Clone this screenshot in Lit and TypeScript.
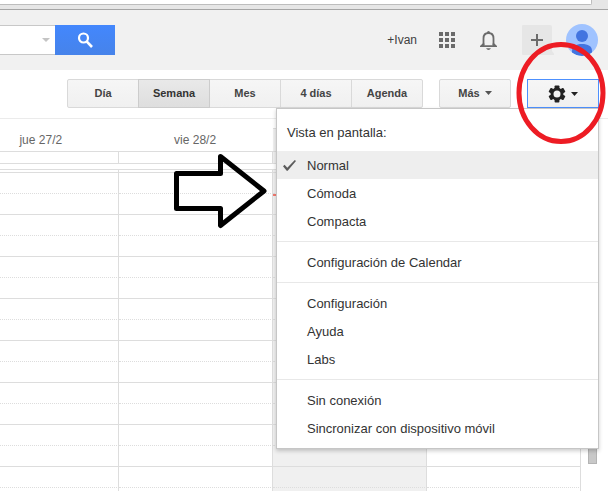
import { LitElement, html, css, svg } from "lit";
import { customElement } from "lit/decorators.js";
import { classMap } from "lit/directives/class-map.js";

const VIEWS = ["Día", "Semana", "Mes", "4 días", "Agenda"];
const DAYS = [
  { label: "jue 27/2", today: false },
  { label: "vie 28/2", today: false },
  { label: "", today: true },
  { label: "", today: false },
];
const DENSITIES = ["Normal", "Cómoda", "Compacta"];
const GROUPS = [
  ["Configuración de Calendar"],
  ["Configuración", "Ayuda", "Labs"],
  ["Sin conexión", "Sincronizar con dispositivo móvil"],
];
const HALF_HOURS = Array.from({ length: 16 }, (_, i) => i);

@customElement("top-bar")
export class TopBar extends LitElement {
  static styles = css`
    :host {
      display: block;
      flex: none;
    }
    .chrome {
      box-sizing: border-box;
      height: 10px;
      padding-right: 16px;
      background: #e6e6e6;
      border-bottom: 1px solid #a5a5a5;
    }
    .address {
      box-sizing: border-box;
      height: 5px;
      background: #fff;
      border: solid #bdbdbd;
      border-width: 0 1px 1px 0;
      border-radius: 0 0 2px 0;
    }
    .bar {
      box-sizing: border-box;
      display: flex;
      align-items: center;
      height: 60px;
      padding-right: 10px;
      background: #f1f1f1;
    }
    form {
      display: flex;
      height: 30px;
    }
    .field {
      box-sizing: border-box;
      display: flex;
      align-items: center;
      width: 55px;
      padding-right: 5px;
      background: #fff;
      border: solid #c8c8c8;
      border-width: 1px 0;
    }
    input {
      flex: 1;
      min-width: 0;
      border: 0;
      padding: 0;
      background: none;
      outline: none;
    }
    svg {
      display: block;
    }
    button {
      display: grid;
      place-items: center;
      border: 0;
      padding: 0;
    }
    .search {
      width: 60px;
      background: linear-gradient(#4387fd, #4683ea);
    }
    nav {
      display: flex;
      align-items: center;
      margin-left: auto;
    }
    a {
      color: #404040;
      font-size: 12px;
      line-height: 16px;
      text-decoration: none;
    }
    .icon {
      background: none;
    }
    .apps {
      margin-left: 22px;
    }
    .bell {
      margin-left: 25px;
    }
    .share {
      margin: 0 12px 0 24px;
    }
  `;

  render() {
    return html`
      <div class="chrome"><div class="address"></div></div>
      <header class="bar">
        <form>
          <div class="field">
            <input type="text" aria-label="Buscar" />
            <svg width="8" height="4"><path d="M0 0h8L4 4z" fill="#c4c4c4" /></svg>
          </div>
          <button class="search" type="button" aria-label="Buscar">
            <svg width="16" height="16" fill="none" stroke="#fff">
              <circle cx="6.500" cy="6" r="4.500" stroke-width="2.200" />
              <path d="M9.600 9.300L15 15" stroke-width="2.600" />
            </svg>
          </button>
        </form>
        <nav>
          <a href="#">+Ivan</a>
          <button class="icon apps" aria-label="Aplicaciones">
            <svg width="16" height="16" fill="#6b6b6b">
              ${[0, 6, 12].map((y) => [0, 6, 12].map((x) => svg`<rect x=${x} y=${y} width="4" height="4" />`))}
            </svg>
          </button>
          <button class="icon bell" aria-label="Notificaciones">
            <svg width="18" height="20" viewBox="0 0 18 20">
              <path d="M3.500 15V8.500C3.500 5 5.500 3 8.500 3s5 2 5 5.500V15" fill="none" stroke="#6b6b6b" stroke-width="1.800" />
              <path d="M7 3V2.500a1.500 1.500 0 0 1 3 0V3zM2.600 13.500h11.800L17 16v1H0v-1zM4.400 13.500V15.200h8.200V13.500zM6 18.200h5q-1 1.800-2.500 1.800T6 18.200z" fill="#6b6b6b" fill-rule="evenodd" />
            </svg>
          </button>
          <button class="icon share" aria-label="Compartir">
            <svg width="32" height="30">
              <path d="M1 0h27a2 2 0 0 1 2 2v24l3 4H1a1 1 0 0 1-1-1V1a1 1 0 0 1 1-1z" fill="#e6e6e6" />
              <path d="M14 9h2v5h5v2h-5v5h-2v-5H9v-2h5z" fill="#6b6b6b" />
            </svg>
          </button>
          <button class="icon" aria-label="Cuenta">
            <svg width="32" height="32">
              <clipPath id="disc"><circle cx="16" cy="16" r="16" /></clipPath>
              <g clip-path="url(#disc)">
                <rect width="32" height="32" fill="#a0c3ff" />
                <circle cx="16" cy="12" r="6" fill="#4274e0" />
                <path d="M6 27c0-5 4-7 10-7s10 2 10 7v2q-10 6-20 0z" fill="#4274e0" />
              </g>
            </svg>
          </button>
        </nav>
      </header>
    `;
  }
}

@customElement("settings-menu")
export class SettingsMenu extends LitElement {
  static styles = css`
    :host {
      display: block;
      box-sizing: border-box;
      padding: 6px 0;
      background: #fff;
      border: 1px solid #c6c6c6;
      box-shadow: 0 2px 4px rgba(0, 0, 0, 0.2);
      color: #333;
      font-size: 13px;
    }
    .title {
      padding-left: 10px;
      line-height: 36px;
    }
    button {
      display: grid;
      grid-template-columns: 30px 1fr;
      align-items: center;
      width: 100%;
      height: 28px;
      padding: 0;
      border: 0;
      background: none;
      color: inherit;
      font: inherit;
      text-align: left;
    }
    .checked {
      background: #eee;
    }
    span {
      grid-column: 2;
    }
    svg {
      grid-row: 1;
      margin-left: 6px;
    }
    hr {
      height: 1px;
      margin: 6px 0;
      border: 0;
      background: #e8e8e8;
    }
  `;

  render() {
    return html`
      <div class="title">Vista en pantalla:</div>
      ${DENSITIES.map(
        (name, i) => html`
          <button role="menuitemradio" aria-checked=${i === 0} class=${classMap({ checked: i === 0 })}>
            ${i === 0
              ? html`<svg width="13" height="11"><path d="M0 6.200l1.600-1.400 2.700 3L11.800 0l1.200 1.100L4.700 10.800H3.700z" fill="#5c5c5c" /></svg>`
              : ""}
            <span>${name}</span>
          </button>
        `,
      )}
      ${GROUPS.map(
        (group) => html`
          <hr />
          ${group.map((name) => html`<button role="menuitem"><span>${name}</span></button>`)}
        `,
      )}
    `;
  }
}

@customElement("view-toolbar")
export class ViewToolbar extends LitElement {
  static styles = css`
    :host {
      box-sizing: border-box;
      display: flex;
      flex: none;
      justify-content: flex-end;
      gap: 16px;
      height: 49px;
      padding: 9px 9px 0 0;
      border-bottom: 1px solid #ebebeb;
    }
    button {
      box-sizing: border-box;
      display: flex;
      align-items: center;
      justify-content: center;
      gap: 5px;
      width: 72px;
      height: 29px;
      padding: 0 0 2px;
      border: 1px solid #d9d9d9;
      border-radius: 2px;
      background: linear-gradient(#f6f6f6, #f0f0f0);
      color: #444;
      font: bold 11px/16px "Liberation Sans", Arial, sans-serif;
    }
    .views {
      display: flex;
    }
    .views button + button {
      margin-left: -1px;
    }
    .views button:not(:first-child) {
      border-top-left-radius: 0;
      border-bottom-left-radius: 0;
    }
    .views button:not(:last-child) {
      border-top-right-radius: 0;
      border-bottom-right-radius: 0;
    }
    .views .selected {
      position: relative;
      border-color: #ccc;
      background: linear-gradient(#e9e9e9, #dedede);
      color: #333;
    }
    .settings {
      position: relative;
    }
    .gear {
      padding: 0;
      border-color: #4d90fe;
      border-radius: 0;
    }
    settings-menu {
      position: absolute;
      top: 29px;
      right: 0;
      z-index: 1;
      width: 323px;
    }
    .ring {
      position: absolute;
      top: -37px;
      left: -11px;
      z-index: 2;
      pointer-events: none;
    }
  `;

  render() {
    return html`
      <div class="views">
        ${VIEWS.map(
          (name) => html`<button class=${classMap({ selected: name === "Semana" })}>${name}</button>`,
        )}
      </div>
      <button>
        Más
        <svg width="7" height="4"><path d="M0 0h7L3.500 4z" fill="#555" /></svg>
      </button>
      <div class="settings">
        <button class="gear" aria-label="Configuración" aria-haspopup="menu" aria-expanded="true">
          <svg width="18" height="18" viewBox="-9 -9 18 18">
            ${[0, 60, 120].map(
              (a) => svg`<rect x="-2.400" y="-8.500" width="4.800" height="17" rx="0.800" fill="#222" transform="rotate(${a})" />`,
            )}
            <circle r="6.400" fill="#222" />
            <circle r="3.500" fill="#f4f4f4" />
          </svg>
          <svg width="7" height="4"><path d="M0 0h7L3.500 4z" fill="#222" /></svg>
        </button>
        <settings-menu role="menu"></settings-menu>
        <svg class="ring" width="90" height="102">
          <ellipse cx="45" cy="51" rx="42" ry="48.500" fill="none" stroke="#ed1c24" stroke-width="5" />
        </svg>
      </div>
    `;
  }
}

@customElement("week-grid")
export class WeekGrid extends LitElement {
  static styles = css`
    :host {
      position: relative;
      display: flex;
      flex: 1;
      min-height: 0;
      overflow: hidden;
    }
    table {
      flex: 1;
      min-width: 0;
      height: max-content;
      table-layout: fixed;
      border-collapse: separate;
      border-spacing: 0;
    }
    col + col {
      width: 26.5%;
    }
    th,
    td {
      box-sizing: border-box;
      padding: 0;
      border: 0 solid #ddd;
    }
    th {
      height: 33px;
      border-bottom-width: 1px;
      color: #666;
      font-size: 12px;
      font-weight: normal;
      line-height: 14px;
      vertical-align: bottom;
    }
    th div {
      box-sizing: border-box;
      height: 23px;
      padding: 5px 2px 0 0;
    }
    th:first-child div {
      padding-right: 57px;
      text-align: right;
    }
    th .today {
      border-top: 1px solid #ddd;
    }
    td {
      height: 21px;
      border-right-width: 1px;
      border-bottom-width: 1px;
    }
    .today {
      background: #f0f0f0;
    }
    .allday td {
      height: 12px;
    }
    .gap td {
      height: 6px;
      border-right-width: 0;
      background: #fff;
    }
    .start td {
      height: 3px;
    }
    .half td {
      border-bottom-style: dotted;
    }
    .track {
      flex: none;
      box-sizing: border-box;
      width: 27px;
      padding: 54px 0 0 7px;
    }
    .thumb {
      box-sizing: border-box;
      width: 9px;
      height: 291px;
      border: 1px solid #b4b4b4;
      background: #c8c8c8;
    }
    .now {
      position: absolute;
      top: 75px;
      right: 181px;
      width: 154px;
      height: 2px;
      background: #f37a70;
    }
    .arrow {
      position: absolute;
      top: 34px;
      right: 340px;
    }
  `;

  row(name: string) {
    return html`<tr class=${name}>
      ${DAYS.map((day) => html`<td class=${classMap({ today: day.today })}></td>`)}
    </tr>`;
  }

  render() {
    return html`
      <table>
        <colgroup>
          ${DAYS.map(() => html`<col />`)}
        </colgroup>
        <thead>
          <tr>
            ${DAYS.map((day) => html`<th><div class=${classMap({ today: day.today })}>${day.label}</div></th>`)}
          </tr>
        </thead>
        <tbody>
          ${this.row("allday")} ${this.row("gap")} ${this.row("start")}
          ${HALF_HOURS.map((i) => this.row(i % 2 ? "hour" : "half"))}
        </tbody>
      </table>
      <div class="track"><div class="thumb"></div></div>
      <div class="now"></div>
      <svg class="arrow" width="96" height="76">
        <path
          d="M4.500 20.500H48.500V3.500L92 38L48.500 72.500V55.500H4.500z"
          fill="none"
          stroke="#000"
          stroke-width="5"
          stroke-linejoin="round"
        />
      </svg>
    `;
  }
}

@customElement("app-root")
export class AppRoot extends LitElement {
  static styles = css`
    :host {
      display: flex;
      flex-direction: column;
      height: 100vh;
      overflow: hidden;
      background: #fff;
      font-family: "Liberation Sans", Arial, sans-serif;
    }
  `;

  render() {
    return html`
      <top-bar></top-bar>
      <view-toolbar></view-toolbar>
      <week-grid></week-grid>
    `;
  }
}
